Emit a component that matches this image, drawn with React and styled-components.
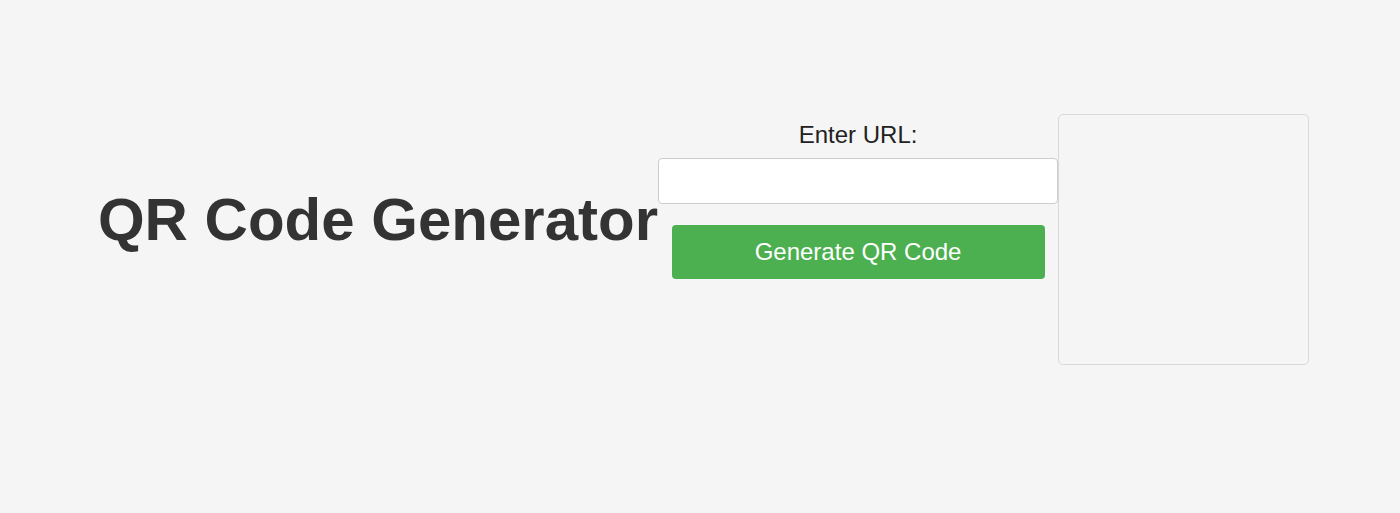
import React from "react";
import styled, { createGlobalStyle } from "styled-components";

const Global = createGlobalStyle`
  html, body { margin: 0; padding: 0; background: #f5f5f5; }
  body { font-family: "Liberation Sans", Arial, sans-serif; color: #333; }
`;

const Page = styled.main`
  display: flex;
  justify-content: center;
  align-items: flex-start;
  padding: 114px 0 0 7px;
  height: 513px;
  box-sizing: border-box;
`;

const Title = styled.h1`
  margin: 70.5px 0 0 0;
  font-size: 60px;
  font-weight: 700;
  line-height: 69px;
  color: #333;
  white-space: nowrap;
`;

const Form = styled.form`
  display: flex;
  flex-direction: column;
  align-items: center;
  width: 400px;
  margin-top: 7px;
`;

const Label = styled.label`
  font-size: 24px;
  line-height: 28px;
  color: #222;
  margin-bottom: 9px;
`;

const Input = styled.input`
  box-sizing: border-box;
  width: 400px;
  height: 46px;
  border: 1px solid #ccc;
  border-radius: 4px;
  background: #fff;
  font-size: 20px;
  padding: 0 10px;
  outline: none;
`;

const Button = styled.button`
  box-sizing: border-box;
  margin-top: 21px;
  width: 373px;
  height: 54px;
  border: none;
  border-radius: 4px;
  background: #4caf50;
  color: #fff;
  font-family: "Liberation Sans", Arial, sans-serif;
  font-size: 24px;
  cursor: pointer;
`;

const QRBox = styled.div`
  box-sizing: border-box;
  width: 251px;
  height: 251px;
  border: 1.5px solid #d9d9d9;
  border-radius: 5px;
`;

export default function App() {
  return (
    <>
      <Global />
      <Page>
        <Title>QR Code Generator</Title>
        <Form onSubmit={(e) => e.preventDefault()}>
          <Label htmlFor="url">Enter URL:</Label>
          <Input id="url" type="text" />
          <Button type="submit">Generate QR Code</Button>
        </Form>
        <QRBox />
      </Page>
    </>
  );
}
